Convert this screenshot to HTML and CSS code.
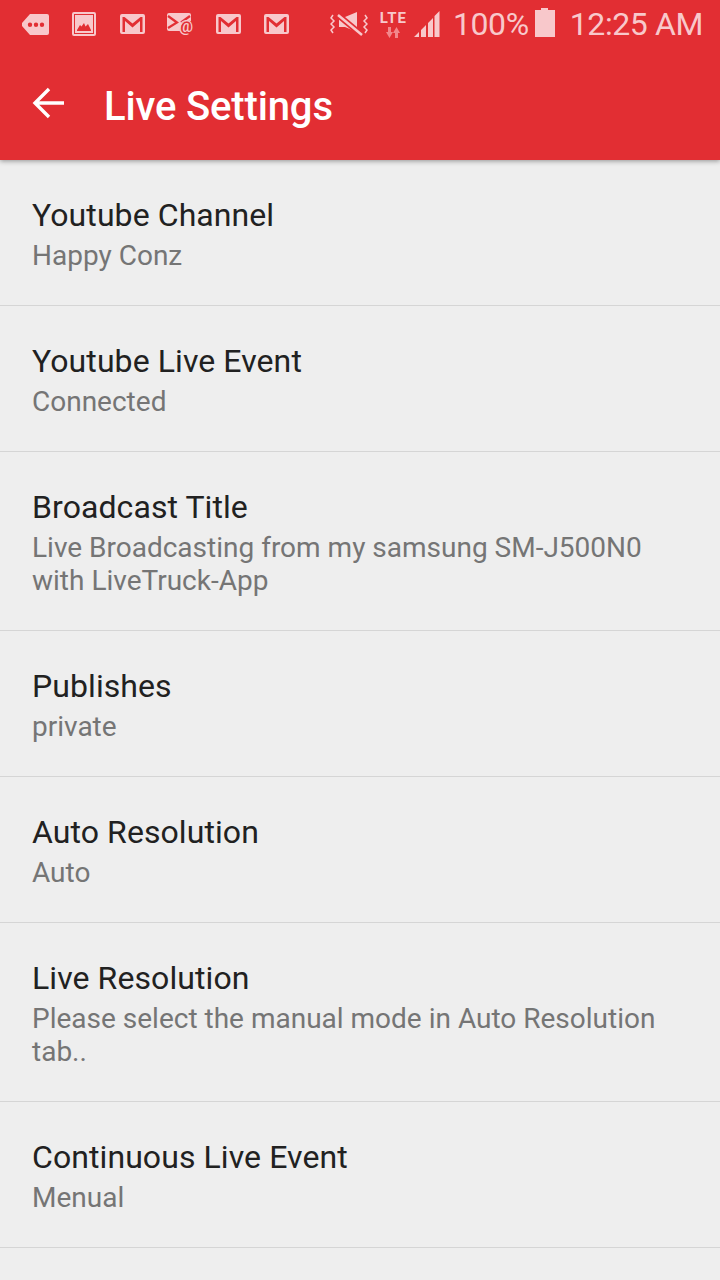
FILE: index.html
```html
<!DOCTYPE html>
<html lang="en">
<head>
	<meta charset="UTF-8">
	<title>Live Settings</title>
	<link rel="stylesheet" href="styles.css">
</head>
<body>
	<svg class="defs" width="0" height="0">
		<symbol id="gmail" viewBox="0 0 25 20">
			<path fill-rule="evenodd" d="M2 0h21a2 2 0 0 1 2 2v16a2 2 0 0 1-2 2H2a2 2 0 0 1-2-2V2a2 2 0 0 1 2-2zM2.500 3v15H5V7l7.500 6.500L20 7v11h2.500V3h-2l-8 6.500L4.500 3z"/>
		</symbol>
	</svg>
	<header class="appbar">
		<div class="status">
			<div class="notify">
				<svg class="ic" width="27" height="21" viewBox="0 0 27 21"><path fill-rule="evenodd" d="M8 0h17a2 2 0 0 1 2 2v17a2 2 0 0 1-2 2H8l-8-9V9zM8 8.500a2.200 2.200 0 1 0 0 4.400 2.200 2.200 0 0 0 0-4.400zm6 0a2.200 2.200 0 1 0 0 4.400 2.200 2.200 0 0 0 0-4.400zm6 0a2.200 2.200 0 1 0 0 4.400 2.200 2.200 0 0 0 0-4.400z"/></svg>
				<svg class="ic pic" width="24" height="24" viewBox="0 0 24 24"><path fill-rule="evenodd" d="M2 0h20a2 2 0 0 1 2 2v20a2 2 0 0 1-2 2H2a2 2 0 0 1-2-2V2a2 2 0 0 1 2-2zM2 2v20h20V2zm1 1h18v18H3zm2 16h14v-1l-3-6-2.500 2.500L12 11l-2.500 3.500L8 13l-3 5z"/></svg>
				<svg class="ic" width="25" height="20"><use href="#gmail"/></svg>
				<svg class="ic mail" width="27" height="23" viewBox="0 0 27 23"><path d="M2 0h20a2 2 0 0 1 2 2v6a9 9 0 0 0-11 10H2a2 2 0 0 1-2-2V2a2 2 0 0 1 2-2z"/><path d="M1 3l9 6.500L1 15M23 3l-9 6.500" fill="none" stroke="#e32e34" stroke-width="2.200"/><text class="at" x="19" y="19">@</text></svg>
				<svg class="ic" width="25" height="20"><use href="#gmail"/></svg>
				<svg class="ic" width="25" height="20"><use href="#gmail"/></svg>
			</div>
			<div class="sys">
				<svg class="ic mute" width="38" height="24" viewBox="0 0 38 24"><path d="M9 5h6l12-5v20l-12-5H9z"/><path d="M8 3l24 20" stroke="#e32e34" stroke-width="6"/><path d="M8 3l24 20" stroke="#f8c8cb" stroke-width="2.500"/><path d="M3 3L1 6l3 3-3 3 3 3-3 3 2 3M35 3l2 3-3 3 3 3-3 3 3 3-2 3" fill="none" stroke="#f8c8cb" stroke-width="1.500"/></svg>
				<div class="lte">
					<span class="lte-label">LTE</span>
					<svg class="arrows" width="16" height="11" viewBox="0 0 16 11"><path d="M3 0h3v5h2l-3.500 6L1 5h2zM10 11h3V6h2l-3.500-6L8 6h2z"/></svg>
				</div>
				<svg class="ic signal" width="26" height="26" viewBox="0 0 26 26"><path d="M0 26l5-5v5zM7 26v-7l5-5v12zM14 26V12l5-5v19zM20.500 26V5l5-5v26z"/></svg>
				<span class="pct">100%</span>
				<svg class="ic batt" width="20" height="29" viewBox="0 0 20 29"><path d="M6 0h7v2h7v27H0V2h6z"/></svg>
				<span class="clock">12:25 AM</span>
			</div>
		</div>
		<div class="toolbar">
			<svg class="back" width="32" height="32" viewBox="0 0 32 32"><path d="M32 16H3M17 2L3 16l14 14" fill="none" stroke="#fff" stroke-width="3.400"/></svg>
			<h1 class="title">Live Settings</h1>
		</div>
	</header>
	<ul class="settings">
		<li><span class="name">Youtube Channel</span><span class="val">Happy Conz</span></li>
		<li><span class="name">Youtube Live Event</span><span class="val">Connected</span></li>
		<li><span class="name">Broadcast Title</span><span class="val">Live Broadcasting from my samsung SM-J500N0 with LiveTruck-App</span></li>
		<li><span class="name">Publishes</span><span class="val">private</span></li>
		<li><span class="name">Auto Resolution</span><span class="val">Auto</span></li>
		<li><span class="name">Live Resolution</span><span class="val">Please select the manual mode in Auto Resolution tab..</span></li>
		<li><span class="name">Continuous Live Event</span><span class="val">Menual</span></li>
	</ul>
</body>
</html>
```
FILE: styles.css
```css
html,body{margin:0;padding:0;height:100%;}
body{width:720px;height:1280px;overflow:hidden;background:#eee;font-family:Roboto,"Noto Sans",sans-serif;}
ul{list-style:none;padding:0;margin:0;}
.defs{position:absolute;}

.appbar{position:relative;height:160px;background:#e22e33;box-shadow:0 1px 5px rgba(0,0,0,.4);}
.status{display:flex;justify-content:space-between;align-items:center;height:48px;color:#f8c8cb;}
.ic{display:block;fill:#f8c8cb;flex:none;}
.at{font-size:16px;font-weight:500;fill:#f8c8cb;text-anchor:middle;}

.notify{display:flex;align-items:center;gap:23px;padding-left:22px;}
.pic{margin-right:1px;}
.mail{margin:0 -1px;}
.sys{display:flex;align-items:center;padding-right:17px;}
.mute{margin-right:12px;}
.lte{display:flex;flex-direction:column;align-items:center;margin-top:2px;margin-right:7px;width:27px;}
.lte-label{font-size:15px;font-weight:700;line-height:13px;letter-spacing:1px;}
.arrows{fill:#f2878b;margin-top:2px;}
.signal{margin-right:13px;}
.pct{font-size:32px;line-height:48px;letter-spacing:-.4px;margin-right:6px;}
.batt{margin-right:15px;margin-top:-3px;}
.clock{font-size:32px;line-height:48px;letter-spacing:-.4px;}

.toolbar{display:flex;align-items:center;height:112px;padding-left:32px;}
.back{flex:none;margin-right:40px;margin-top:-2px;}
.title{margin:6px 0 0;color:#fff;font-size:40px;font-weight:500;line-height:40px;letter-spacing:-.15px;}

.settings li{display:flex;flex-direction:column;padding:36px 32px 33px;border-bottom:1px solid #d5d5d5;}
.name{color:#212121;font-size:32px;line-height:38px;letter-spacing:.08px;margin-bottom:5px;}
.val{color:#757575;font-size:28px;line-height:33px;}
```
